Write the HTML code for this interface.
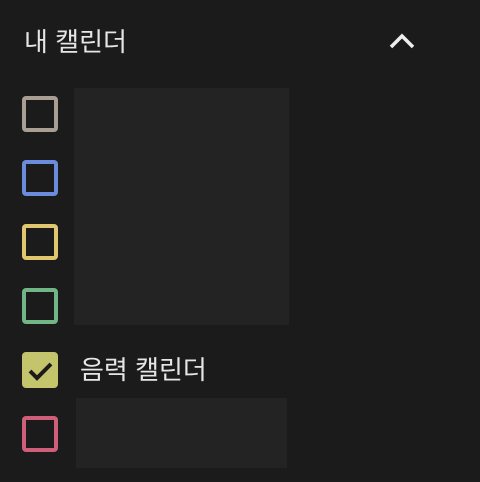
<!DOCTYPE html>
<html><head><meta charset="utf-8"><style>
body{margin:0;width:480px;height:482px;background:#1b1b1b;position:relative;overflow:hidden;font-family:"Liberation Sans","Noto Sans CJK KR",sans-serif;}
.t{position:absolute;color:#e6e6e6;font-size:26px;line-height:1;}
.cb{position:absolute;left:22px;width:28px;height:28px;border:4px solid;border-radius:4px;}
.g{position:absolute;background:#232323;}
</style></head><body>
<div class="t" style="left:24px;top:29px;">내 캘린더</div>
<svg style="position:absolute;left:388px;top:32px" width="28" height="18" viewBox="0 0 28 18"><path d="M3 15 L14 4 L25 15" fill="none" stroke="#eeeeee" stroke-width="3.5"/></svg>
<div class="g" style="left:74px;top:88px;width:215px;height:237px;"></div>
<div class="g" style="left:76px;top:398px;width:211px;height:70px;"></div>
<div class="cb" style="top:96px;border-color:#a89e93"></div>
<div class="cb" style="top:160px;border-color:#6b8bdd"></div>
<div class="cb" style="top:224px;border-color:#e0c76f"></div>
<div class="cb" style="top:288px;border-color:#71b485"></div>
<div class="cb" style="top:352px;border-color:#c3c46b;background:#c3c46b"></div>
<svg style="position:absolute;left:22px;top:352px" width="36" height="36" viewBox="0 0 36 36"><path d="M8 19 L15 26 L29 12" fill="none" stroke="#1b1b1b" stroke-width="4"/></svg>
<div class="cb" style="top:416px;border-color:#cf5f78"></div>
<div class="t" style="left:80px;top:357px;">음력 캘린더</div>
</body></html>
